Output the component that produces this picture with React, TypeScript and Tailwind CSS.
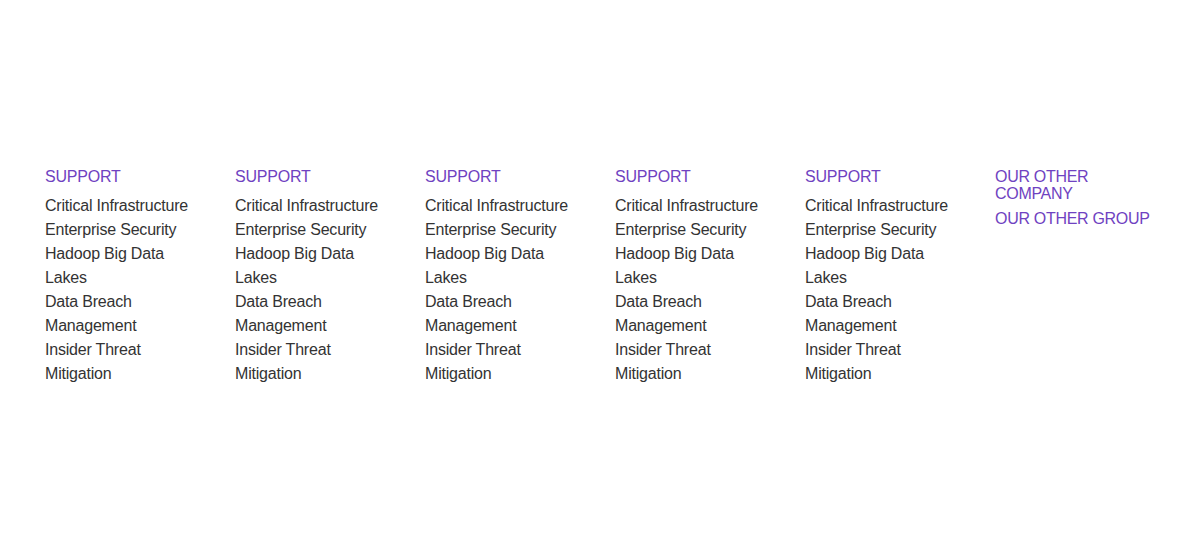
const items = [
  'Critical Infrastructure',
  'Enterprise Security',
  'Hadoop Big Data Lakes',
  'Data Breach Management',
  'Insider Threat Mitigation',
];

function SupportColumn() {
  return (
    <div className="w-[190px] px-[15px]">
      <h4 className="mb-[9px] text-[16px] leading-[17px] tracking-[-0.2px] uppercase text-[#6f42c1]">Support</h4>
      <ul>
        {items.map((item) => (
          <li key={item} className="text-[16px] leading-[24px] tracking-[-0.2px] text-[#333]">
            {item}
          </li>
        ))}
      </ul>
    </div>
  );
}

export default function App() {
  return (
    <div className="min-h-[553px] bg-white font-['Liberation_Sans',Arial,sans-serif] pt-[168px]">
      <div className="mx-auto flex w-[1140px]">
        {[1, 2, 3, 4, 5].map((n) => (
          <SupportColumn key={n} />
        ))}
        <div className="w-[190px] px-[15px]">
          <h4 className="mb-2 text-[16px] leading-[17px] tracking-[-0.3px] text-[#6f42c1]">OUR OTHER COMPANY</h4>
          <h4 className="mb-2 text-[16px] leading-[17px] tracking-[-0.3px] text-[#6f42c1]">OUR OTHER GROUP</h4>
        </div>
      </div>
    </div>
  );
}
